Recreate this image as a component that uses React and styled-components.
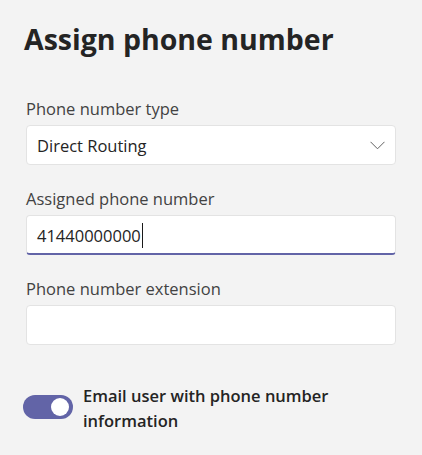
import React from "react";
import styled, { createGlobalStyle } from "styled-components";

const GlobalStyle = createGlobalStyle`
  html, body {
    margin: 0;
    padding: 0;
    background: #f3f3f3;
  }
  body {
    font-family: "Open Sans", "Noto Sans", sans-serif;
    color: #242424;
  }
`;

const Page = styled.div`
  width: 422px;
  height: 455px;
  box-sizing: border-box;
  padding: 21px 26px 0 26px;
  background: #f3f3f3;
  display: flex;
  flex-direction: column;
`;

const Title = styled.h1`
  margin: 0 0 41px -2px;
  font-size: 28.5px;
  line-height: 36px;
  font-weight: 700;
  color: #242424;
`;

const Fields = styled.div`
  display: flex;
  flex-direction: column;
  gap: 23px;
`;

const Field = styled.div`
  display: flex;
  flex-direction: column;
  gap: 5px;
`;

const Label = styled.label`
  font-size: 16.5px;
  line-height: 22px;
  color: #424242;
`;

const Box = styled.div`
  box-sizing: border-box;
  width: 370px;
  height: 40px;
  background: #ffffff;
  border: 1px solid #e3e3e3;
  border-bottom: ${(p) => (p.$focused ? "2px solid #6264a7" : "1px solid #e3e3e3")};
  border-radius: 4px;
  padding: ${(p) => (p.$focused ? "1px 10px 0 10px" : "0 10px")};
  display: flex;
  align-items: center;
  justify-content: space-between;
  font-size: 16.5px;
  color: #242424;
`;

const Value = styled.span`
  display: inline-flex;
  align-items: center;
  white-space: nowrap;
`;

const Caret = styled.span`
  display: inline-block;
  width: 1px;
  height: 25px;
  margin-left: 1px;
  background: #1a1a1a;
`;

const Chevron = styled.svg`
  width: 15px;
  height: 9px;
  flex: none;
`;

const ToggleRow = styled.div`
  margin-top: 38px;
  display: flex;
  align-items: center;
  gap: 10px;
  margin-left: -3px;
`;

const Track = styled.div`
  box-sizing: border-box;
  width: 50px;
  height: 24px;
  flex: none;
  border-radius: 12px;
  background: ${(p) => (p.$on ? "#6264a7" : "#ffffff")};
  display: flex;
  align-items: center;
  justify-content: ${(p) => (p.$on ? "flex-end" : "flex-start")};
  padding: 0 4px;
  margin-top: -2px;
`;

const Knob = styled.div`
  width: 18px;
  height: 18px;
  border-radius: 50%;
  background: #ffffff;
`;

const ToggleText = styled.div`
  font-size: 16.5px;
  line-height: 25px;
  font-weight: 600;
  color: #242424;
  width: 260px;
`;

export default function App() {
  return (
    <>
      <GlobalStyle />
      <Page>
        <Title>Assign phone number</Title>
        <Fields>
          <Field>
            <Label>Phone number type</Label>
            <Box>
              <Value>Direct Routing</Value>
              <Chevron viewBox="0 0 15 9" aria-hidden="true">
                <polyline
                  points="0.5,0.8 7.5,7.8 14.5,0.8"
                  fill="none"
                  stroke="#616161"
                  strokeWidth="1"
                />
              </Chevron>
            </Box>
          </Field>
          <Field>
            <Label>Assigned phone number</Label>
            <Box $focused>
              <Value>
                41440000000
                <Caret />
              </Value>
            </Box>
          </Field>
          <Field>
            <Label>Phone number extension</Label>
            <Box />
          </Field>
        </Fields>
        <ToggleRow>
          <Track $on>
            <Knob />
          </Track>
          <ToggleText>Email user with phone number information</ToggleText>
        </ToggleRow>
      </Page>
    </>
  );
}
